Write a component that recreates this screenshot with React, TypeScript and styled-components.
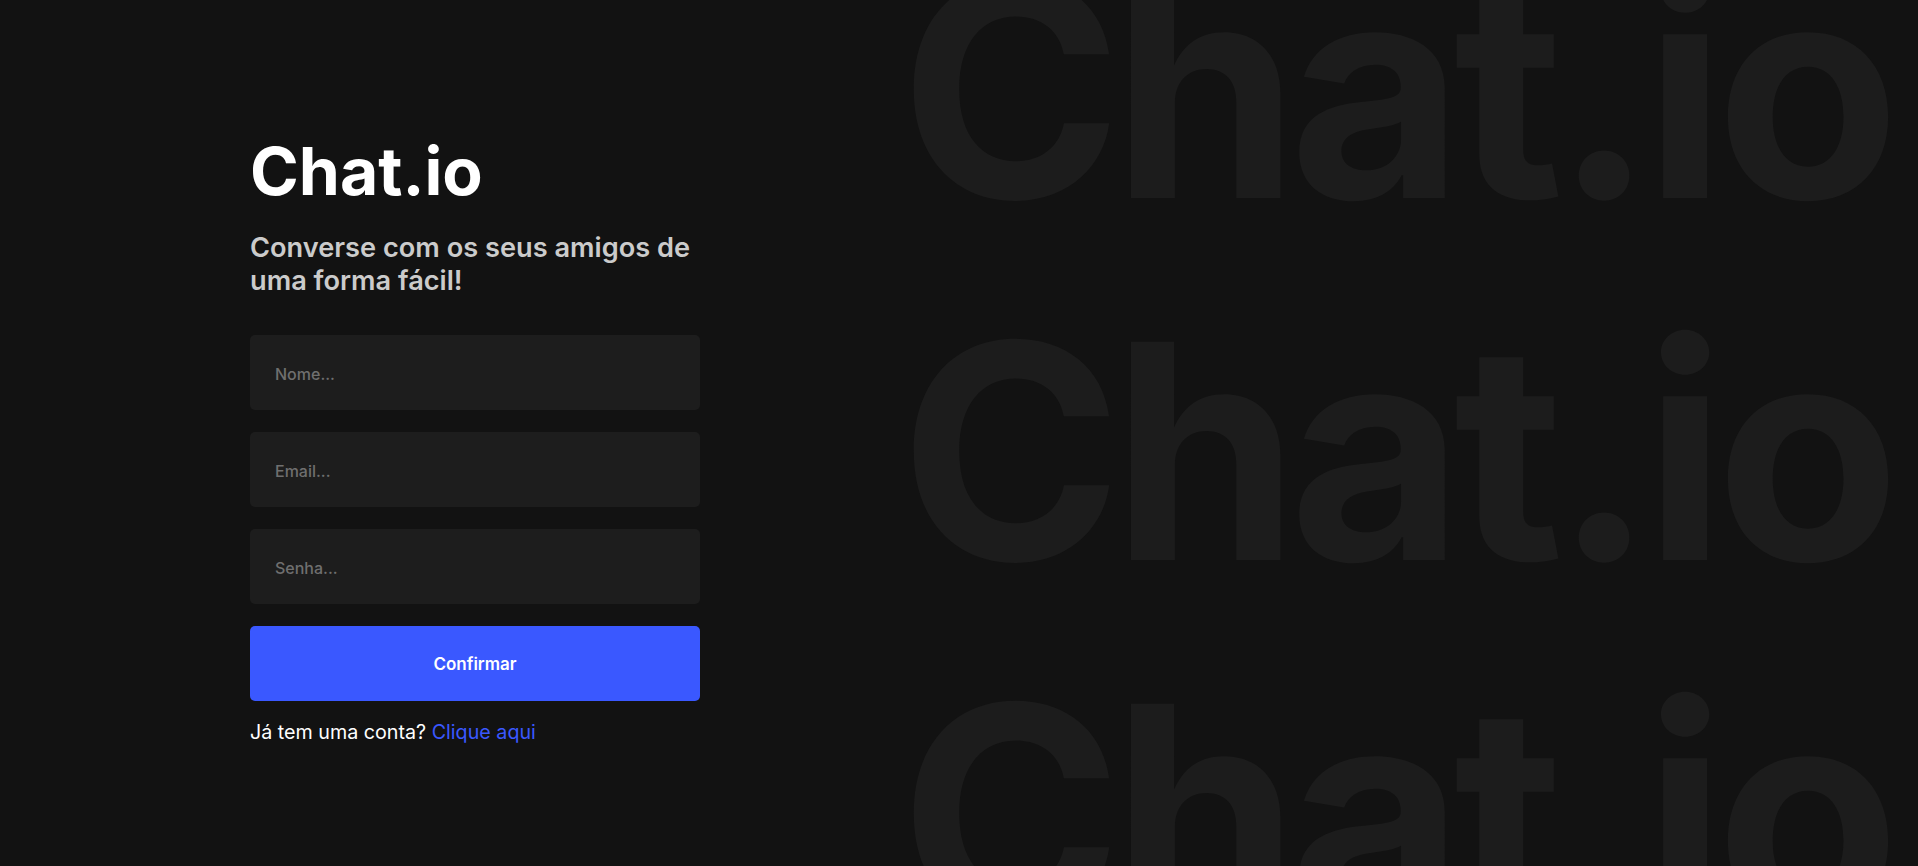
import React from "react";
import styled, { createGlobalStyle } from "styled-components";

const GlobalStyle = createGlobalStyle`
  * { box-sizing: border-box; }
  html, body { margin: 0; padding: 0; background: #121212; }
  body { font-family: Inter, "Noto Sans", sans-serif; }
`;

const Page = styled.main`
  display: flex;
  height: 100vh;
  overflow: hidden;
  background: #121212;
`;

const FormColumn = styled.section`
  flex: 0 0 auto;
  width: 450px;
  margin-left: 250px;
  padding-top: 138px;
  display: flex;
  flex-direction: column;
`;

const Title = styled.h1`
  margin: 0;
  font-size: 66px;
  line-height: 66px;
  font-weight: 700;
  color: #ffffff;
`;

const Subtitle = styled.h2`
  margin: 28px 0 0;
  font-size: 27.2px;
  line-height: 32.6px;
  font-weight: 600;
  color: #cbcbcb;
`;

const Form = styled.form`
  display: flex;
  flex-direction: column;
  gap: 22.5px;
  margin-top: 38px;
`;

const Input = styled.input`
  height: 74.5px;
  width: 100%;
  border: none;
  outline: none;
  border-radius: 5px;
  background: #1d1d1d;
  padding: 3px 25px 0;
  font-family: Inter, sans-serif;
  font-size: 16px;
  font-weight: 500;
  color: #e0e0e0;
  &::placeholder {
    color: #6f6f6f;
  }
`;

const Button = styled.button`
  height: 74.5px;
  width: 100%;
  border: none;
  border-radius: 5px;
  background: #3a58ff;
  color: #ffffff;
  padding: 2px 0 0;
  font-family: Inter, sans-serif;
  font-size: 17px;
  font-weight: 600;
  cursor: pointer;
`;

const Footer = styled.p`
  margin: 19px 0 0;
  font-size: 19.7px;
  line-height: 24px;
  color: #ffffff;
`;

const Link = styled.a`
  color: #3a58ff;
  text-decoration: none;
`;

const DecorColumn = styled.aside`
  flex: 1 1 auto;
  min-width: 0;
  padding-left: 200px;
  display: flex;
  flex-direction: column;
  margin-top: -92px;
  pointer-events: none;
  user-select: none;
`;

const DecorWord = styled.span`
  display: block;
  font-size: 300px;
  line-height: 362px;
  font-weight: 700;
  color: #1c1c1c;
  letter-spacing: -9.7px;
  white-space: nowrap;
`;

export default function App() {
  return (
    <>
      <GlobalStyle />
      <Page>
        <FormColumn>
          <Title>Chat.io</Title>
          <Subtitle>Converse com os seus amigos de uma forma fácil!</Subtitle>
          <Form onSubmit={(e) => e.preventDefault()}>
            <Input type="text" placeholder="Nome..." />
            <Input type="email" placeholder="Email..." />
            <Input type="password" placeholder="Senha..." />
            <Button type="submit">Confirmar</Button>
          </Form>
          <Footer>
            Já tem uma conta? <Link href="#">Clique aqui</Link>
          </Footer>
        </FormColumn>
        <DecorColumn aria-hidden="true">
          <DecorWord>Chat.io</DecorWord>
          <DecorWord>Chat.io</DecorWord>
          <DecorWord>Chat.io</DecorWord>
        </DecorColumn>
      </Page>
    </>
  );
}
